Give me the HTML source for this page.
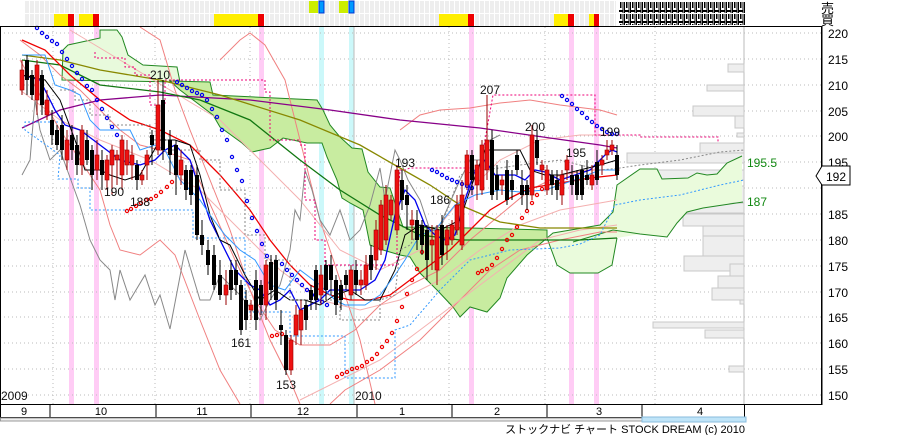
<!DOCTYPE html>
<html><head><meta charset="utf-8"><style>
body{margin:0;background:#fff;width:900px;height:435px;overflow:hidden;font-family:"Liberation Sans","Noto Sans CJK JP",sans-serif}
svg{position:absolute;left:0;top:0}
</style></head><body>
<svg width="900" height="435" xmlns="http://www.w3.org/2000/svg" font-family="Liberation Sans, Noto Sans CJK JP, sans-serif">
<defs>
<pattern id="cell" width="5" height="12" patternUnits="userSpaceOnUse"><rect width="4" height="12" fill="#eeeeee"/></pattern>
<pattern id="tofu" width="6" height="11" patternUnits="userSpaceOnUse"><rect x="0.5" y="0.5" width="4.5" height="10" fill="none" stroke="#000"/><rect x="2" y="2" width="1.5" height="6" fill="#000"/></pattern>
</defs>
<rect x="24" y="1" width="592" height="12" fill="url(#cell)"/>
<rect x="24" y="14" width="592" height="12" fill="url(#cell)"/>
<rect x="309" y="1" width="9" height="12" fill="#ccee00"/><rect x="319" y="1" width="5" height="12" fill="#0099ff" stroke="#0033cc"/>
<rect x="339" y="1" width="9" height="12" fill="#ccee00"/><rect x="349" y="1" width="5" height="12" fill="#0099ff" stroke="#0033cc"/>
<g fill="#ffee00"><rect x="54" y="14" width="14" height="12"/><rect x="79" y="14" width="14" height="12"/><rect x="214" y="14" width="44" height="12"/><rect x="439" y="14" width="29" height="12"/><rect x="554" y="14" width="14" height="12"/><rect x="589" y="14" width="5" height="12"/></g>
<g fill="#ee0000"><rect x="68" y="14" width="6" height="12"/><rect x="93" y="14" width="6" height="12"/><rect x="258" y="14" width="6" height="12"/><rect x="468" y="14" width="6" height="12"/><rect x="568" y="14" width="6" height="12"/><rect x="594" y="14" width="5" height="12"/></g>
<rect x="619" y="2" width="126" height="11" fill="url(#tofu)"/>
<rect x="619" y="14" width="126" height="11" fill="url(#tofu)"/>
<text x="821" y="13" font-size="13">売</text><text x="821" y="25" font-size="13">買</text>

<g fill="#ffccf5"><rect x="69" y="27" width="5" height="377"/><rect x="94" y="27" width="5" height="377"/><rect x="259" y="27" width="5" height="377"/><rect x="469" y="27" width="5" height="377"/><rect x="569" y="27" width="5" height="377"/><rect x="594" y="27" width="5" height="377"/></g>
<g fill="#ccf8fa"><rect x="319" y="27" width="5" height="377"/><rect x="349" y="27" width="5" height="377"/></g>

<g stroke="#bbb" stroke-dasharray="1,3">
<line x1="0" y1="33" x2="822" y2="33"/><line x1="0" y1="59" x2="822" y2="59"/><line x1="0" y1="85" x2="822" y2="85"/><line x1="0" y1="111" x2="822" y2="111"/><line x1="0" y1="136" x2="822" y2="136"/><line x1="0" y1="162" x2="822" y2="162"/><line x1="0" y1="188" x2="822" y2="188"/><line x1="0" y1="214" x2="822" y2="214"/><line x1="0" y1="240" x2="822" y2="240"/><line x1="0" y1="266" x2="822" y2="266"/><line x1="0" y1="292" x2="822" y2="292"/><line x1="0" y1="317" x2="822" y2="317"/><line x1="0" y1="343" x2="822" y2="343"/><line x1="0" y1="369" x2="822" y2="369"/><line x1="0" y1="395" x2="822" y2="395"/>
<line x1="53" y1="27" x2="53" y2="404"/><line x1="155" y1="27" x2="155" y2="404"/><line x1="250" y1="27" x2="250" y2="404"/><line x1="449" y1="27" x2="449" y2="404"/><line x1="545" y1="27" x2="545" y2="404"/><line x1="655" y1="27" x2="655" y2="404"/>
</g>
<line x1="354" y1="27" x2="354" y2="404" stroke="#bbb"/>
<line x1="744" y1="27" x2="744" y2="404" stroke="#bbb"/>

<g fill="#eeeeee" stroke="#c8c8c8">
<rect x="728" y="64" width="16" height="8"/><rect x="707" y="85" width="37" height="6"/><rect x="693" y="106" width="51" height="10"/><rect x="735" y="116" width="9" height="12"/><rect x="737" y="133" width="7" height="4"/><rect x="700" y="143" width="44" height="10"/><rect x="627" y="153" width="117" height="10"/><rect x="650" y="170" width="94" height="10"/><rect x="648" y="186" width="96" height="17"/><rect x="684" y="203" width="60" height="10"/><rect x="683" y="214" width="61" height="12"/><rect x="703" y="226" width="41" height="10"/><rect x="703" y="236" width="41" height="20"/><rect x="684" y="256" width="60" height="15"/><rect x="730" y="264" width="14" height="12"/><rect x="718" y="276" width="26" height="12"/><rect x="712" y="288" width="32" height="12"/><rect x="740" y="300" width="4" height="4"/><rect x="653" y="322" width="91" height="6"/><rect x="705" y="330" width="39" height="8"/><rect x="729" y="366" width="15" height="6"/></g>

<!-- cloud -->
<polygon fill="#e8fadc" stroke="#228822" points="63,50 68,45 100,38 100,30 117,30 122,37 128,55 143,65 177,67 180,82 62,80"/>
<polygon fill="#c8eca0" stroke="#228822" points="170,81 210,82 213,95 317,100 323,110 330,125 340,137 352,148 362,149 368,172 380,187 390,188 403,227 470,228 547,230 547,238 527,255 507,278 500,298 487,312 470,307 460,317 453,307 437,290 420,273 410,257 400,255 383,250 370,245 363,210 350,203 342,198 337,180 327,157 322,143 307,143 283,138 270,148 252,152 242,143 220,127 213,115 180,90"/>
<polygon fill="#eafbdc" stroke="none" points="547,238 553,233 600,225 613,212 617,185 640,169 657,169 662,179 688,178 697,173 707,175 717,174 727,163 742,156 742,201 703,208 687,212 677,223 667,237 640,234 617,238 612,265 598,273 570,273 557,265"/>
<polyline fill="none" stroke="#228822" points="547,238 553,233 600,225 613,212 617,185 640,169 657,169 662,179 688,178 697,173 707,175 717,174 727,163 742,156"/>
<polyline fill="none" stroke="#228822" points="547,238 557,265 570,273 598,273 612,265 617,238"/>
<polyline fill="none" stroke="#228822" points="573,242 613,230 640,234 667,237 677,223 687,212 703,208 743,202"/>

<g fill="none" stroke="#f08080" stroke-width="1">
<polyline points="20,40 40,55 60,75 80,90 100,110 120,130 140,145 160,150 190,160 215,215 235,260 255,300 275,330 300,345 330,345 355,330 380,305 410,285 440,270 470,240 500,215 530,190 560,175 590,170 620,170"/>
<polyline points="20,60 40,95 60,130 80,160 100,190 110,225 120,250 140,255 160,240 175,255 200,320 220,370 240,404"/>
<polyline points="140,27 160,40 175,90 190,130 210,180 230,230 250,290 270,340 290,380 300,404"/>
<polyline points="220,60 240,40 250,33 265,45 285,80 300,140 320,220 340,280 360,340 375,404"/>
<polyline points="330,404 345,390 380,370 420,340 460,300 490,270 520,250 560,240 600,232 617,232"/>
<polyline points="400,130 420,115 440,110 470,108 500,103 530,100 560,105 600,110 617,115"/>
</g>
<g fill="none" stroke="#f4b0b0">
<polyline points="20,90 60,120 100,140 150,160 200,190 240,230 280,270 320,300 360,310 400,300 440,280 480,250 520,225 560,210 617,200"/>
<polyline points="70,30 120,60 170,90 220,120 260,160 300,200 340,250 380,270 420,250 460,200 500,160 540,140 580,135 617,135"/>
<polyline points="300,400 340,380 380,360 420,330 460,300 500,270 540,240 580,230 617,225"/>
</g>
<polyline fill="none" stroke="#888" points="22,175 30,160 35,100 40,130 50,160 60,150 80,205 90,240 100,260 110,270 115,300 120,270 130,300 145,275 155,305 160,295 170,329 185,250 200,300 210,300 220,275 240,295 260,320 270,300 280,285 290,250 295,210 300,220 305,170 312,190 320,220 330,235 340,210 350,240 360,230 370,205 380,168 385,200 395,150 400,160 408,180 420,200 430,230 440,225 460,180 470,160 480,160 490,140 500,135"/>

<g fill="none" stroke-width="1.3">
<polyline stroke="#880088" points="22,128 60,110 100,100 160,95 250,100 330,110 400,120 480,128 550,138 600,145 617,148"/>
<polyline stroke="#888800" points="22,55 60,60 100,70 160,80 220,95 300,120 360,145 400,168 430,185 460,205 500,222 540,228 580,228 617,228"/>
<polyline stroke="#117711" points="22,60 60,65 100,85 160,92 200,100 250,120 300,160 340,190 380,215 420,235 460,240 500,240 540,240 580,240 617,238"/>
<polyline stroke="#ee0000" points="22,40 45,50 70,75 100,100 130,120 160,130 190,145 220,175 250,210 270,240 290,265 310,285 330,295 350,300 370,300 390,295 410,280 430,265 450,250 470,230 490,210 510,198 530,188 560,183 590,178 617,175"/>
<polyline stroke="#0000ee" points="22,75 40,80 55,110 65,125 80,130 100,145 120,160 140,165 155,160 165,150 175,145 190,160 200,190 210,220 220,240 235,270 250,285 260,290 270,305 280,300 290,290 300,310 310,305 320,300 330,290 345,290 360,290 375,280 385,260 395,215 405,190 415,200 425,225 435,235 445,240 455,235 465,200 475,170 485,160 495,175 505,175 515,175 525,180 535,170 545,172 560,180 575,175 590,170 605,155 612,150 617,152"/>
<polyline stroke="#000" stroke-width="1" points="22,75 45,80 60,100 75,140 85,170 100,170 110,175 125,180 140,175 160,140 175,140 190,145 200,175 210,215 220,240 230,245 245,275 260,300 275,290 290,300 305,300 320,305 335,295 350,290 365,300 380,300 395,270 405,235 420,225 440,230 460,220 470,190 485,150 500,150 520,150 530,170 545,175 560,175 580,170 600,165 617,160"/>
<polyline stroke="#3399ff" stroke-width="1" points="22,55 45,55 55,85 70,90 80,95 90,120 100,130 115,130 130,130 140,150 155,145 165,150 180,180 200,200 210,215 225,235 240,250 255,260 270,285 285,290 300,270 320,285 335,300 345,305 365,305 380,295 395,275 405,260 420,235 435,230 455,205 475,195 500,190 520,192 545,190 560,185 580,178 600,170 617,170"/>
<polyline stroke="#3399ff" stroke-dasharray="2,2" stroke-width="1" points="58,122 25,122 25,130 60,155 58,179 78,179 78,188 90,188 90,210 193,210 193,238 245,238 245,312 290,312 290,336 345,336 345,378 395,378 395,330 410,325 440,290 470,260 510,250 560,248 580,244 600,235 615,205 640,200 680,195 720,185 744,180"/>
<polyline stroke="#ee0077" stroke-dasharray="2,2" stroke-width="1" points="95,52 95,58 125,58 125,67 135,67 135,75 150,75 150,105 165,105 165,80 265,80 265,92 270,92 270,140 300,140 300,145 305,145 305,200 315,200 315,240 325,240 325,265 397,265 397,210 400,170 405,170 410,168 480,168 493,95 595,95 595,135 640,135 640,137 718,137 718,142"/>
<polyline stroke="#888" stroke-dasharray="2,2" stroke-width="1" points="60,90 75,90 75,100 90,100 90,115 110,115 110,125 150,125 150,140 170,140 170,150 200,150 200,160 220,160 220,190 245,190 245,235 265,235 265,260 290,260 290,300 340,300 340,320 380,320 380,300 395,295 400,250 410,245 420,230 440,230 460,175 480,170 500,168 520,165 560,160 600,170 620,168 640,165 680,160 720,152 744,150"/>
</g>
<g fill="none" stroke="#0000ee" stroke-width="1.2">
<circle cx="37" cy="28" r="1.6"/><circle cx="42" cy="33" r="1.6"/><circle cx="47" cy="37" r="1.6"/><circle cx="52" cy="41" r="1.6"/><circle cx="57" cy="44" r="1.6"/><circle cx="62" cy="52" r="1.6"/><circle cx="67" cy="59" r="1.6"/><circle cx="72" cy="66" r="1.6"/><circle cx="77" cy="73" r="1.6"/><circle cx="82" cy="79" r="1.6"/><circle cx="87" cy="86" r="1.6"/><circle cx="92" cy="90" r="1.6"/><circle cx="97" cy="100" r="1.6"/><circle cx="102" cy="109" r="1.6"/><circle cx="107" cy="118" r="1.6"/><circle cx="112" cy="127" r="1.6"/><circle cx="117" cy="135" r="1.6"/><circle cx="122" cy="143" r="1.6"/>
<circle cx="177" cy="82" r="1.6"/><circle cx="182" cy="85" r="1.6"/><circle cx="187" cy="88" r="1.6"/><circle cx="192" cy="91" r="1.6"/><circle cx="197" cy="93" r="1.6"/><circle cx="202" cy="95" r="1.6"/><circle cx="207" cy="100" r="1.6"/><circle cx="212" cy="109" r="1.6"/><circle cx="217" cy="117" r="1.6"/><circle cx="222" cy="130" r="1.6"/><circle cx="227" cy="140" r="1.6"/><circle cx="232" cy="157" r="1.6"/><circle cx="237" cy="170" r="1.6"/><circle cx="242" cy="181" r="1.6"/><circle cx="247" cy="201" r="1.6"/><circle cx="252" cy="218" r="1.6"/><circle cx="257" cy="231" r="1.6"/><circle cx="262" cy="244" r="1.6"/><circle cx="267" cy="256" r="1.6"/>
<circle cx="282" cy="264" r="1.6"/><circle cx="287" cy="270" r="1.6"/><circle cx="292" cy="275" r="1.6"/><circle cx="297" cy="280" r="1.6"/><circle cx="302" cy="285" r="1.6"/><circle cx="307" cy="290" r="1.6"/><circle cx="312" cy="295" r="1.6"/><circle cx="317" cy="300" r="1.6"/><circle cx="322" cy="302" r="1.6"/><circle cx="327" cy="305" r="1.6"/>
<circle cx="432" cy="170" r="1.6"/><circle cx="437" cy="172" r="1.6"/><circle cx="442" cy="175" r="1.6"/><circle cx="447" cy="178" r="1.6"/><circle cx="452" cy="180" r="1.6"/><circle cx="457" cy="182" r="1.6"/><circle cx="462" cy="184" r="1.6"/><circle cx="467" cy="186" r="1.6"/><circle cx="472" cy="188" r="1.6"/>
<circle cx="562" cy="96" r="1.6"/><circle cx="567" cy="100" r="1.6"/><circle cx="572" cy="104" r="1.6"/><circle cx="577" cy="109" r="1.6"/><circle cx="582" cy="113" r="1.6"/><circle cx="587" cy="118" r="1.6"/><circle cx="592" cy="122" r="1.6"/><circle cx="597" cy="126" r="1.6"/><circle cx="602" cy="129" r="1.6"/><circle cx="607" cy="132" r="1.6"/><circle cx="612" cy="134" r="1.6"/><circle cx="617" cy="134" r="1.6"/>
</g>
<g fill="none" stroke="#ee0000" stroke-width="1.2">
<circle cx="127" cy="211" r="1.6"/><circle cx="131" cy="209" r="1.6"/><circle cx="136" cy="206" r="1.6"/><circle cx="141" cy="203" r="1.6"/><circle cx="146" cy="200" r="1.6"/><circle cx="151" cy="199" r="1.6"/><circle cx="156" cy="196" r="1.6"/><circle cx="161" cy="192" r="1.6"/><circle cx="167" cy="187" r="1.6"/><circle cx="172" cy="182" r="1.6"/>
<circle cx="272" cy="336" r="1.6"/><circle cx="277" cy="335" r="1.6"/><circle cx="282" cy="334" r="1.6"/>
<circle cx="337" cy="377" r="1.6"/><circle cx="342" cy="374" r="1.6"/><circle cx="347" cy="372" r="1.6"/><circle cx="352" cy="369" r="1.6"/><circle cx="357" cy="368" r="1.6"/><circle cx="362" cy="366" r="1.6"/><circle cx="367" cy="362" r="1.6"/><circle cx="372" cy="359" r="1.6"/><circle cx="377" cy="354" r="1.6"/><circle cx="382" cy="347" r="1.6"/><circle cx="387" cy="341" r="1.6"/><circle cx="392" cy="333" r="1.6"/><circle cx="397" cy="321" r="1.6"/><circle cx="402" cy="307" r="1.6"/><circle cx="407" cy="294" r="1.6"/><circle cx="412" cy="280" r="1.6"/><circle cx="417" cy="269" r="1.6"/><circle cx="422" cy="252" r="1.6"/>
<circle cx="478" cy="273" r="1.6"/><circle cx="482" cy="271" r="1.6"/><circle cx="487" cy="269" r="1.6"/><circle cx="492" cy="265" r="1.6"/><circle cx="497" cy="258" r="1.6"/><circle cx="502" cy="249" r="1.6"/><circle cx="507" cy="240" r="1.6"/><circle cx="512" cy="235" r="1.6"/><circle cx="517" cy="227" r="1.6"/><circle cx="522" cy="218" r="1.6"/><circle cx="527" cy="211" r="1.6"/><circle cx="532" cy="203" r="1.6"/><circle cx="537" cy="195" r="1.6"/><circle cx="542" cy="189" r="1.6"/><circle cx="547" cy="185" r="1.6"/><circle cx="552" cy="180" r="1.6"/>
</g>

<g stroke-width="1">
<g stroke="#000">
<line x1="27" y1="55" x2="27" y2="95"/><line x1="32" y1="70" x2="32" y2="100"/><line x1="42" y1="70" x2="42" y2="115"/><line x1="52" y1="110" x2="52" y2="145"/><line x1="57" y1="125" x2="57" y2="150"/><line x1="62" y1="115" x2="62" y2="160"/><line x1="72" y1="125" x2="72" y2="160"/><line x1="77" y1="135" x2="77" y2="175"/><line x1="87" y1="130" x2="87" y2="165"/><line x1="92" y1="145" x2="92" y2="190"/><line x1="102" y1="150" x2="102" y2="190"/><line x1="137" y1="160" x2="137" y2="190"/><line x1="152" y1="130" x2="152" y2="165"/><line x1="163" y1="80" x2="163" y2="160"/><line x1="170" y1="130" x2="170" y2="175"/><line x1="176" y1="140" x2="176" y2="195"/><line x1="186" y1="165" x2="186" y2="200"/><line x1="191" y1="165" x2="191" y2="205"/><line x1="197" y1="165" x2="197" y2="240"/><line x1="202" y1="220" x2="202" y2="255"/><line x1="208" y1="240" x2="208" y2="275"/><line x1="214" y1="245" x2="214" y2="290"/><line x1="220" y1="260" x2="220" y2="300"/><line x1="231" y1="260" x2="231" y2="300"/><line x1="236" y1="260" x2="236" y2="295"/><line x1="241" y1="280" x2="241" y2="335"/><line x1="246" y1="290" x2="246" y2="330"/><line x1="256" y1="270" x2="256" y2="330"/><line x1="261" y1="280" x2="261" y2="315"/><line x1="271" y1="255" x2="271" y2="300"/><line x1="276" y1="255" x2="276" y2="310"/><line x1="281" y1="310" x2="281" y2="345"/><line x1="286" y1="330" x2="286" y2="375"/><line x1="306" y1="300" x2="306" y2="330"/><line x1="311" y1="285" x2="311" y2="310"/><line x1="316" y1="265" x2="316" y2="310"/><line x1="326" y1="260" x2="326" y2="300"/><line x1="331" y1="255" x2="331" y2="295"/><line x1="336" y1="275" x2="336" y2="315"/><line x1="341" y1="280" x2="341" y2="310"/><line x1="346" y1="270" x2="346" y2="290"/><line x1="356" y1="260" x2="356" y2="295"/><line x1="371" y1="245" x2="371" y2="280"/><line x1="402" y1="170" x2="402" y2="210"/><line x1="407" y1="185" x2="407" y2="230"/><line x1="417" y1="210" x2="417" y2="250"/><line x1="422" y1="220" x2="422" y2="255"/><line x1="427" y1="225" x2="427" y2="280"/><line x1="442" y1="215" x2="442" y2="265"/><line x1="472" y1="150" x2="472" y2="195"/><line x1="492" y1="130" x2="492" y2="200"/><line x1="497" y1="165" x2="497" y2="200"/><line x1="507" y1="160" x2="507" y2="205"/><line x1="512" y1="170" x2="512" y2="200"/><line x1="517" y1="150" x2="517" y2="175"/><line x1="522" y1="170" x2="522" y2="205"/><line x1="527" y1="180" x2="527" y2="210"/><line x1="537" y1="130" x2="537" y2="165"/><line x1="552" y1="170" x2="552" y2="195"/><line x1="557" y1="170" x2="557" y2="200"/><line x1="572" y1="165" x2="572" y2="195"/><line x1="577" y1="170" x2="577" y2="200"/><line x1="582" y1="165" x2="582" y2="200"/><line x1="587" y1="160" x2="587" y2="185"/><line x1="597" y1="150" x2="597" y2="185"/><line x1="617" y1="145" x2="617" y2="180"/>
</g>
<g fill="#000">
<rect x="25" y="60" width="4" height="20"/><rect x="30" y="75" width="4" height="20"/><rect x="40" y="75" width="4" height="30"/><rect x="50" y="120" width="4" height="15"/><rect x="55" y="130" width="4" height="15"/><rect x="60" y="125" width="4" height="25"/><rect x="70" y="135" width="4" height="15"/><rect x="75" y="145" width="4" height="20"/><rect x="85" y="140" width="4" height="20"/><rect x="90" y="150" width="4" height="25"/><rect x="100" y="160" width="4" height="15"/><rect x="135" y="165" width="4" height="15"/><rect x="150" y="135" width="4" height="10"/><rect x="161" y="100" width="4" height="50"/><rect x="168" y="140" width="4" height="15"/><rect x="174" y="145" width="4" height="30"/><rect x="184" y="170" width="4" height="20"/><rect x="189" y="170" width="4" height="25"/><rect x="195" y="175" width="4" height="60"/><rect x="200" y="235" width="4" height="10"/><rect x="206" y="250" width="4" height="15"/><rect x="212" y="255" width="4" height="30"/><rect x="218" y="275" width="4" height="20"/><rect x="229" y="270" width="4" height="20"/><rect x="234" y="270" width="4" height="15"/><rect x="239" y="285" width="4" height="45"/><rect x="244" y="300" width="4" height="20"/><rect x="254" y="280" width="4" height="40"/><rect x="259" y="285" width="4" height="20"/><rect x="269" y="262" width="4" height="28"/><rect x="274" y="260" width="4" height="40"/><rect x="279" y="325" width="4" height="5"/><rect x="284" y="335" width="4" height="35"/><rect x="304" y="305" width="4" height="15"/><rect x="309" y="290" width="4" height="10"/><rect x="314" y="270" width="4" height="30"/><rect x="324" y="265" width="4" height="25"/><rect x="329" y="265" width="4" height="15"/><rect x="334" y="280" width="4" height="25"/><rect x="339" y="285" width="4" height="15"/><rect x="344" y="275" width="4" height="10"/><rect x="354" y="270" width="4" height="15"/><rect x="369" y="255" width="4" height="15"/><rect x="400" y="180" width="4" height="20"/><rect x="405" y="195" width="4" height="10"/><rect x="415" y="220" width="4" height="20"/><rect x="420" y="225" width="4" height="20"/><rect x="425" y="230" width="4" height="30"/><rect x="440" y="225" width="4" height="30"/><rect x="470" y="155" width="4" height="25"/><rect x="490" y="140" width="4" height="55"/><rect x="495" y="175" width="4" height="15"/><rect x="505" y="170" width="4" height="30"/><rect x="510" y="180" width="4" height="10"/><rect x="515" y="155" width="4" height="15"/><rect x="520" y="185" width="4" height="10"/><rect x="525" y="185" width="4" height="10"/><rect x="535" y="140" width="4" height="18"/><rect x="550" y="175" width="4" height="10"/><rect x="555" y="180" width="4" height="10"/><rect x="570" y="175" width="4" height="10"/><rect x="575" y="175" width="4" height="20"/><rect x="580" y="170" width="4" height="25"/><rect x="585" y="175" width="4" height="5"/><rect x="595" y="162" width="4" height="18"/><rect x="615" y="155" width="4" height="20"/>
</g>
<g stroke="#990000">
<line x1="22" y1="60" x2="22" y2="95"/><line x1="37" y1="60" x2="37" y2="115"/><line x1="47" y1="90" x2="47" y2="120"/><line x1="67" y1="130" x2="67" y2="170"/><line x1="82" y1="125" x2="82" y2="175"/><line x1="97" y1="140" x2="97" y2="180"/><line x1="107" y1="155" x2="107" y2="190"/><line x1="112" y1="145" x2="112" y2="195"/><line x1="117" y1="150" x2="117" y2="185"/><line x1="122" y1="135" x2="122" y2="190"/><line x1="127" y1="140" x2="127" y2="175"/><line x1="132" y1="145" x2="132" y2="180"/><line x1="142" y1="170" x2="142" y2="185"/><line x1="147" y1="150" x2="147" y2="180"/><line x1="158" y1="80" x2="158" y2="155"/><line x1="181" y1="150" x2="181" y2="185"/><line x1="226" y1="270" x2="226" y2="305"/><line x1="251" y1="300" x2="251" y2="320"/><line x1="266" y1="260" x2="266" y2="320"/><line x1="291" y1="335" x2="291" y2="375"/><line x1="296" y1="305" x2="296" y2="345"/><line x1="301" y1="300" x2="301" y2="345"/><line x1="321" y1="265" x2="321" y2="305"/><line x1="351" y1="265" x2="351" y2="300"/><line x1="361" y1="270" x2="361" y2="295"/><line x1="366" y1="255" x2="366" y2="290"/><line x1="376" y1="220" x2="376" y2="270"/><line x1="381" y1="200" x2="381" y2="255"/><line x1="386" y1="185" x2="386" y2="245"/><line x1="391" y1="195" x2="391" y2="220"/><line x1="397" y1="165" x2="397" y2="235"/><line x1="412" y1="210" x2="412" y2="240"/><line x1="432" y1="225" x2="432" y2="270"/><line x1="437" y1="225" x2="437" y2="285"/><line x1="447" y1="225" x2="447" y2="260"/><line x1="452" y1="220" x2="452" y2="245"/><line x1="457" y1="195" x2="457" y2="235"/><line x1="462" y1="180" x2="462" y2="250"/><line x1="467" y1="150" x2="467" y2="190"/><line x1="477" y1="160" x2="477" y2="200"/><line x1="482" y1="140" x2="482" y2="195"/><line x1="487" y1="95" x2="487" y2="180"/><line x1="502" y1="175" x2="502" y2="195"/><line x1="532" y1="125" x2="532" y2="200"/><line x1="542" y1="160" x2="542" y2="180"/><line x1="547" y1="165" x2="547" y2="195"/><line x1="562" y1="170" x2="562" y2="205"/><line x1="567" y1="155" x2="567" y2="180"/><line x1="592" y1="165" x2="592" y2="190"/><line x1="602" y1="155" x2="602" y2="175"/><line x1="607" y1="140" x2="607" y2="160"/><line x1="612" y1="140" x2="612" y2="155"/>
</g>
<g fill="#ee1111" stroke="#990000" stroke-width="0.6">
<rect x="20" y="70" width="4" height="20"/><rect x="35" y="65" width="4" height="35"/><rect x="45" y="100" width="4" height="15"/><rect x="65" y="140" width="4" height="20"/><rect x="80" y="130" width="4" height="35"/><rect x="95" y="155" width="4" height="15"/><rect x="105" y="160" width="4" height="20"/><rect x="110" y="150" width="4" height="15"/><rect x="115" y="155" width="4" height="5"/><rect x="120" y="140" width="4" height="35"/><rect x="125" y="150" width="4" height="15"/><rect x="130" y="155" width="4" height="10"/><rect x="140" y="175" width="4" height="5"/><rect x="145" y="155" width="4" height="10"/><rect x="156" y="105" width="4" height="45"/><rect x="179" y="160" width="4" height="15"/><rect x="224" y="285" width="4" height="10"/><rect x="249" y="305" width="4" height="5"/><rect x="264" y="265" width="4" height="40"/><rect x="289" y="340" width="4" height="30"/><rect x="294" y="315" width="4" height="20"/><rect x="299" y="310" width="4" height="20"/><rect x="319" y="275" width="4" height="20"/><rect x="349" y="270" width="4" height="25"/><rect x="359" y="280" width="4" height="5"/><rect x="364" y="265" width="4" height="20"/><rect x="374" y="230" width="4" height="30"/><rect x="379" y="205" width="4" height="45"/><rect x="384" y="195" width="4" height="45"/><rect x="389" y="200" width="4" height="15"/><rect x="395" y="170" width="4" height="60"/><rect x="410" y="220" width="4" height="5"/><rect x="430" y="240" width="4" height="5"/><rect x="435" y="230" width="4" height="40"/><rect x="445" y="230" width="4" height="15"/><rect x="450" y="225" width="4" height="15"/><rect x="455" y="205" width="4" height="25"/><rect x="460" y="195" width="4" height="50"/><rect x="465" y="155" width="4" height="30"/><rect x="475" y="165" width="4" height="20"/><rect x="480" y="145" width="4" height="45"/><rect x="485" y="140" width="4" height="30"/><rect x="500" y="180" width="4" height="5"/><rect x="530" y="135" width="4" height="60"/><rect x="540" y="165" width="4" height="5"/><rect x="545" y="170" width="4" height="20"/><rect x="560" y="175" width="4" height="20"/><rect x="565" y="160" width="4" height="10"/><rect x="590" y="175" width="4" height="10"/><rect x="600" y="160" width="4" height="5"/><rect x="605" y="150" width="4" height="5"/><rect x="610" y="145" width="4" height="5"/>
</g>
</g>

<g font-size="12" fill="#111">
<text x="150" y="79">210</text><text x="104" y="196">190</text><text x="130" y="206">188</text><text x="231" y="347">161</text><text x="276" y="389">153</text><text x="395" y="167">193</text><text x="430" y="204">186</text><text x="480" y="94">207</text><text x="525" y="131">200</text><text x="566" y="157">195</text><text x="600" y="136">199</text>
<text x="1" y="400">2009</text><text x="355" y="400">2010</text>
</g>
<g font-size="12" fill="#118811"><text x="747" y="167">195.5</text><text x="747" y="206">187</text></g>

<rect x="0.5" y="26.5" width="821" height="378" fill="none" stroke="#000"/>
<line x1="822" y1="26" x2="822" y2="405" stroke="#000"/>
<g font-size="12" fill="#000">
<text x="828" y="38">220</text><text x="828" y="64">215</text><text x="828" y="90">210</text><text x="828" y="116">205</text><text x="828" y="141">200</text><text x="828" y="167">195</text><text x="828" y="219">185</text><text x="828" y="245">180</text><text x="828" y="271">175</text><text x="828" y="297">170</text><text x="828" y="322">165</text><text x="828" y="348">160</text><text x="828" y="374">155</text><text x="828" y="400">150</text>
</g>
<polygon points="816,176 822,166 850,166 850,185 822,185" fill="#fff" stroke="#000"/>
<text x="826" y="181" font-size="12">192</text>

<rect x="0.5" y="404.5" width="744" height="13" fill="#fff" stroke="#000"/>
<g stroke="#000"><line x1="50" y1="404" x2="50" y2="417"/><line x1="156" y1="404" x2="156" y2="417"/><line x1="251" y1="404" x2="251" y2="417"/><line x1="357" y1="404" x2="357" y2="417"/><line x1="452" y1="404" x2="452" y2="417"/><line x1="547" y1="404" x2="547" y2="417"/><line x1="642" y1="404" x2="642" y2="417"/></g>
<g font-size="11" text-anchor="middle"><text x="24" y="415">9</text><text x="101" y="415">10</text><text x="202" y="415">11</text><text x="303" y="415">12</text><text x="402" y="415">1</text><text x="497" y="415">2</text><text x="599" y="415">3</text><text x="700" y="415">4</text></g>
<rect x="0.5" y="418" width="744" height="3" fill="#eee" stroke="#999"/>
<rect x="642" y="417" width="104" height="5" fill="#bfe4f8" stroke="#88bbdd"/>
<text x="745" y="433" font-size="11" text-anchor="end">ストックナビ チャート STOCK DREAM (c) 2010</text>
</svg>
</body></html>
